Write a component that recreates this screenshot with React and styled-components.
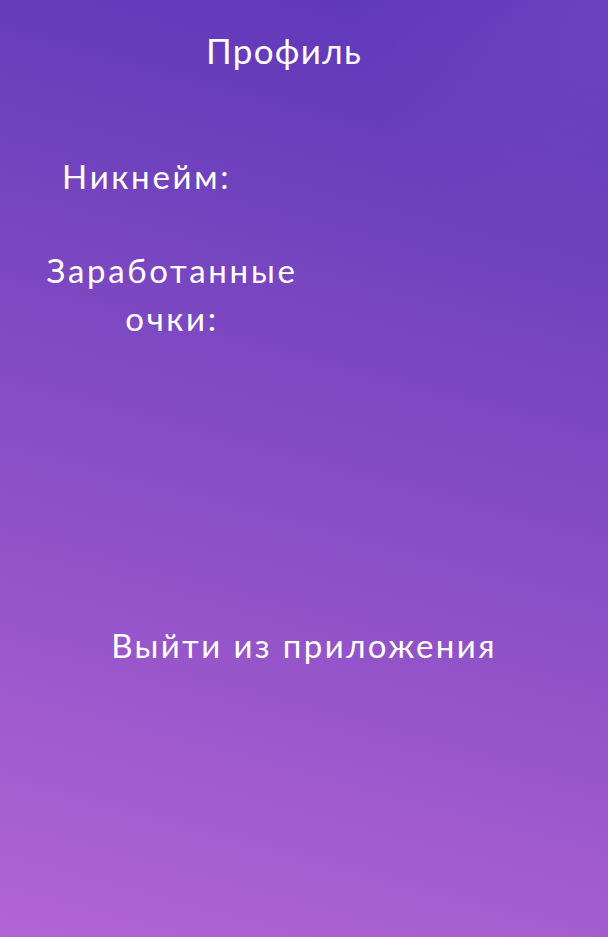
import React from 'react';
import styled, { createGlobalStyle } from 'styled-components';

const GlobalStyle = createGlobalStyle`
  html, body {
    margin: 0;
    padding: 0;
  }
  body {
    font-family: Lato, "Noto Sans", sans-serif;
    color: #fff;
  }
`;

const Screen = styled.div`
  min-height: 937px;
  display: flex;
  flex-direction: column;
  background:
    radial-gradient(circle at 100% 0%, rgba(140, 90, 205, 0.35) 0, rgba(140, 90, 205, 0) 260px),
    linear-gradient(15deg, #b265d4 0%, #9353c9 35%, #7444bf 70%, #5a35b8 100%);
`;

const Title = styled.h1`
  margin: 0;
  padding: 28px 0 0 0;
  margin-left: -40px;
  text-align: center;
  font-size: 35px;
  font-weight: 400;
  line-height: 44px;
  letter-spacing: 1.3px;
`;

const InfoList = styled.div`
  display: flex;
  flex-direction: column;
  gap: 46px;
  margin-top: 80px;
`;

const InfoRow = styled.div`
  display: flex;
  padding-left: ${(p) => p.$indent}px;
`;

const Label = styled.span`
  display: block;
  width: ${(p) => p.$width}px;
  text-align: center;
  font-size: 33px;
  line-height: 48px;
  letter-spacing: 2.7px;
`;

const Value = styled.span`
  font-size: 33px;
  line-height: 48px;
`;

const Footer = styled.div`
  display: flex;
  justify-content: center;
  margin-top: 279px;
`;

const LogoutButton = styled.button`
  border: none;
  background: transparent;
  padding: 0;
  color: #fff;
  font-family: inherit;
  font-size: 33px;
  line-height: 48px;
  letter-spacing: 2.4px;
  cursor: pointer;
`;

const App = () => {
  const nickname = '';
  const points = '';

  return (
    <Screen>
      <GlobalStyle />
      <Title>Профиль</Title>

      <InfoList>
        <InfoRow $indent={62}>
          <Label>Никнейм:</Label>
          <Value>{nickname}</Value>
        </InfoRow>
        <InfoRow $indent={45}>
          <Label $width={254}>Заработанные очки:</Label>
          <Value>{points}</Value>
        </InfoRow>
      </InfoList>

      <Footer>
        <LogoutButton>Выйти из приложения</LogoutButton>
      </Footer>
    </Screen>
  );
};

export default App;
